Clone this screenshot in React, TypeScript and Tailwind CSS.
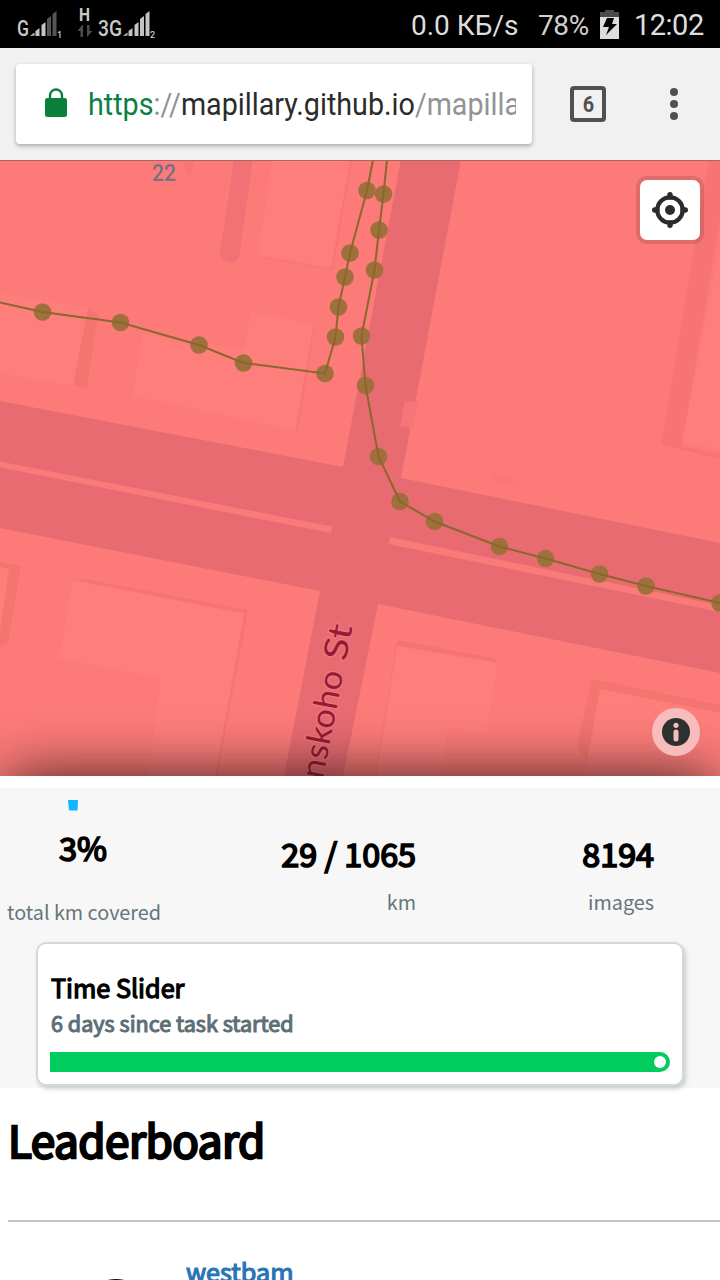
import React from 'react';

const TRACKS = [
  [[-20, 298], [42.5, 312], [120.5, 322.5], [199, 345], [243.5, 363], [325, 373.5], [335.5, 337], [338.5, 307], [345, 277], [350, 253], [367, 190.5], [375, 150]],
  [[388, 150], [383.5, 194], [379, 230], [374.5, 270], [361.5, 336], [365.5, 385.5], [378.5, 456.5], [400, 501.5], [434.5, 521.5], [499.5, 546.5], [545.5, 558.5], [599.5, 574], [646, 586], [720, 603]],
];

const STATS = [
  { value: '29 / 1065', label: 'km', box: 'w-[199px]' },
  { value: '8194', label: 'images', box: 'w-[238px]' },
];

const SIM_BARS = [
  { x: 0, h: 3 }, { x: 5, h: 8 }, { x: 11, h: 14 }, { x: 16.5, h: 20 }, { x: 22, h: 25 },
];

function Signal({ name, sim, lit, className }: { name: string; sim: number; lit: number; className: string }) {
  const textW = name === 'G' ? 12 : 24;
  const x0 = textW + 1.5;
  return (
    <svg className={className} height="30" viewBox={`0 0 ${x0 + 34} 30`} width={x0 + 34}>
      <text x="0" y="25" fontSize="22" fontWeight="500" fill="#c9c9c9" textLength={textW} lengthAdjust="spacingAndGlyphs">{name}</text>
      {SIM_BARS.map((b, i) => (
        <path key={b.x} d={`M${x0 + b.x} 25v-${Math.max(b.h - 3, 0.5)}l4-3v${b.h}z`} fill={i < lit ? '#c4c4c4' : '#555'} />
      ))}
      <text x={x0 + 26.5} y="27" fontSize="9" fontWeight="500" fill="#c9c9c9">{sim}</text>
    </svg>
  );
}

function StatusBar() {
  return (
    <div className="h-12 bg-black flex items-center text-[#dedede] text-[29px]">
      <Signal name="G" sim={1} lit={3} className="ml-[17px] mt-1" />
      <svg className="ml-3 w-4 h-[34px] -mt-1" viewBox="0 0 16 34">
        <text x="2" y="16" fontSize="18" fontWeight="700" fill="#c9c9c9" textLength="11" lengthAdjust="spacingAndGlyphs">H</text>
        <path d="M5 20l-4.500 6H3.500v6H6V20zM10 20h2.500v6h3l-5.500 6z" fill="#4c4c4c" />
      </svg>
      <Signal name="3G" sim={2} lit={5} className="ml-[5px] mt-1" />
      <div className="ml-auto mr-[16px] flex items-center whitespace-nowrap pt-1">
        <span className="w-[107px] text-[28px]">0.0 КБ/s</span>
        <span className="ml-[20px] w-[52px] text-[28px] tracking-[-0.4px] text-[#d0d0d0]">78%</span>
        <svg className="ml-[10px] w-5 h-[30px] -mt-1" viewBox="0 0 20 30">
          <path d="M5 1h9v2h5v5H0V3h5z" fill="#4b4b4b" />
          <path d="M0 8h19v22H0z" fill="#dcdcdc" />
          <path d="M7 9h7l-2 6h5L6 26l3-8H3z" fill="#000" />
        </svg>
        <span className="ml-[14px] w-[70px] tracking-[-0.5px]">12:02</span>
      </div>
    </div>
  );
}

function AddressBar() {
  return (
    <div className="h-28 bg-[#f1f1f1] flex items-center px-4">
      <div className="w-[516px] h-20 rounded-[4px] bg-white shadow-[0_2px_4px_rgba(0,0,0,0.3)] flex items-center pl-[28px] pr-4">
        <svg className="w-6 h-[30px] shrink-0 -mt-1" viewBox="0 0 24 30">
          <path d="M6 12V8.500a6 6 0 0 1 12 0V12" fill="none" stroke="#0a803a" strokeWidth="2.400" />
          <rect x="1" y="11" width="22" height="19" rx="2.500" fill="#0a803a" />
        </svg>
        <div className="ml-5 w-[429px] overflow-hidden whitespace-nowrap">
          <div className="w-max origin-left scale-x-[0.896] text-[32px] leading-10 text-[#2b2b2b]">
            <span className="text-[#0b8043]">https</span>
            <span className="text-[#939393]">://</span>
            mapillary.github.io
            <span className="text-[#939393]">/mapilla</span>
          </div>
        </div>
      </div>
      <div className="ml-[38px] w-9 h-9 rounded-[4px] border-4 border-[#505050] flex items-center justify-center text-[22px] font-bold text-[#505050]">
        <span className="scale-x-90">6</span>
      </div>
      <div className="ml-[64px] flex flex-col gap-1">
        <i className="w-2 h-2 rounded-full bg-[#505050]" />
        <i className="w-2 h-2 rounded-full bg-[#505050]" />
        <i className="w-2 h-2 rounded-full bg-[#505050]" />
      </div>
    </div>
  );
}

function MapView() {
  return (
    <div className="relative h-[616px] overflow-hidden bg-[#fc7b79]">
      <svg className="block w-full h-full" viewBox="0 160 720 616">
        {/* building shadows */}
        <g fill="#f47470">
          <path d="M87 308L98 315 87 388 72 385z" />
          <path d="M0 562l21 4-13 77-8 4z" />
          <path d="M75 580l9-1 164 31-31 166h-2l29-163z" />
          <path d="M396 646l2-6 95 18 6 5-102-17-20 130h-2z" />
          <path d="M592 679l128 26v8l-120-24-13 71-10-13z" />
          <path d="M709 160h11v60l-38 226 38 8v5l-59-14z" opacity=".8" />
          <path d="M260 254l72 13v4l-72-13z" opacity=".4" />
          <path d="M350 160h2l-19 110h-2zM313 323l2 1-17 107-2-1z" opacity=".8" />
        </g>
        {/* buildings */}
        <g fill="#fe7e7c">
          <path d="M0 293l88 15-15 78-73-13z" />
          <path d="M272 160h78l-19 108-73-13z" />
          <path d="M251 312l63 12-20 106-162-34 11-62 102 15z" />
          <path d="M0 567l9 2-9 63z" />
          <path d="M73 581l171 33-29 162h-67l13-98-102-19z" />
          <path d="M397 646l101 17-12 71-38-6-8 48h-64z" />
          <path d="M600 689l120 24v63h-135z" />
          <path d="M720 245v205l-38-8z" />
        </g>
        <path d="M493 474l26 5-2 7-26-4z" fill="#f97977" />
        <path d="M234 160h19l-14 97a10 10 0 0 1-19-4z" fill="#f07275" />
        <path d="M182 160h12l-5 20z" fill="#f67577" />

        {/* roads */}
        <path d="M0 401L343 467 401 160H461L401 478 720 543V673L378 604 343 776H284L320 591 0 528z" fill="#e86b71" />
        <path d="M0 461.500L332 526.500 331 533 0 467.500zM390 537L720 605.500V612L388 544z" fill="#fa7a79" />
        <path d="M405 401l13 1-5 26-13-2z" fill="#f57679" />

        {TRACKS.map((track, i) => (
          <g key={i}>
            <g fill="#a0703c">
              {track.map(([x, y]) => <circle key={`${x}-${y}`} cx={x} cy={y} r="8.800" />)}
            </g>
            <polyline points={track.map((p) => p.join(',')).join(' ')} fill="none" stroke="#8a672d" strokeWidth="2" />
          </g>
        ))}

        <text x="152" y="180.500" className="font-['Roboto']" fontSize="24" fontWeight="500" fill="#7d6f83" textLength="24" lengthAdjust="spacingAndGlyphs">22</text>
        <g
          transform="translate(352.500 626.500) rotate(-79)"
          textAnchor="end"
          className="font-['Lato',sans-serif]"
          fontSize="33"
          fill="#951a33"
          stroke="#ee777e"
          strokeWidth="2.500"
          strokeLinejoin="round"
          paintOrder="stroke"
        >
          <text x="0" y="0" textLength="36" lengthAdjust="spacingAndGlyphs">St</text>
          <text x="-47" y="0" textLength="109" lengthAdjust="spacingAndGlyphs">nskoho</text>
        </g>
      </svg>

      <div className="absolute inset-x-2 -bottom-32 h-32 shadow-[0_0_56px_rgba(30,15,15,0.85)]" />
      <div className="absolute inset-x-0 top-0 h-px bg-[#b4605e]" />

      <button className="absolute top-5 right-5 w-[60px] h-[60px] rounded-[7px] bg-white shadow-[0_0_0_4px_rgba(0,0,0,0.12)] flex items-center justify-center">
        <svg className="w-9 h-9" viewBox="0 0 36 36">
          <circle cx="18" cy="18" r="12.700" fill="none" stroke="#2b2b2b" strokeWidth="4.200" />
          <circle cx="18" cy="18" r="5" fill="#2b2b2b" />
          <path d="M18 2.700V5M18 31v2.300M2.700 18H5M31 18h2.300" stroke="#2b2b2b" strokeWidth="5.400" strokeLinecap="round" />
        </svg>
      </button>

      <div className="absolute right-5 bottom-5 w-12 h-12 rounded-full bg-[#f7bcbb] flex items-center justify-center">
        <svg className="w-7 h-7" viewBox="0 0 28 28">
          <circle cx="14" cy="14" r="14" fill="#2c302f" />
          <circle cx="14" cy="7.300" r="2.600" fill="#f7bcbb" />
          <path d="M14 14v7" stroke="#f7bcbb" strokeWidth="5" strokeLinecap="round" />
        </svg>
      </div>
    </div>
  );
}

function Stats() {
  return (
    <div className="h-[300px] bg-[#f7f7f7] font-['Noto_Sans_CJK_SC',sans-serif]">
      <div className="flex h-[154px]">
        <div className="w-[217px] pt-3">
          <svg className="ml-[67px] block w-3 h-[11px]" viewBox="0 0 12 11">
            <path d="M1 0H11L10.500 10.500H2z" fill="#10b5ff" />
          </svg>
          <div className="ml-[59px] mt-[11px] h-[50px] text-[32.500px] leading-[50px] [-webkit-text-stroke:1.700px]">3%</div>
          <div className="ml-[7px] mt-[25px] text-[19.800px] leading-[30px] text-[#65757b] whitespace-nowrap">total km covered</div>
        </div>
        {STATS.map((s) => (
          <div key={s.label} className={`${s.box} pt-10 text-right whitespace-nowrap`}>
            <div className="h-[50px] text-[32.300px] leading-[50px] [-webkit-text-stroke:1.700px]">{s.value}</div>
            <div className="mt-[9px] text-[19.800px] leading-[30px] text-[#65757b]">{s.label}</div>
          </div>
        ))}
      </div>
      <div className="ml-9 w-[648px] h-[144px] rounded-[10px] border-2 border-[#d3d9d9] bg-white shadow-[2px_3px_4px_rgba(150,165,165,0.5)] pt-[26px] px-3">
        <h2 className="ml-px text-[25.200px] leading-[34px] [-webkit-text-stroke:1.300px]">Time Slider</h2>
        <p className="ml-px mt-[2px] text-[21.600px] leading-[34px] [-webkit-text-stroke:1.100px] text-[#5d6f76]">6 days since task started</p>
        <div className="mt-3 w-[620px] h-5 rounded-r-full bg-[#00cd5e] flex items-center justify-end pr-1">
          <i className="w-3 h-3 rounded-full bg-white" />
        </div>
      </div>
    </div>
  );
}

function Leaderboard() {
  return (
    <div className="pl-2 pt-4 font-['Noto_Sans_CJK_SC',sans-serif]">
      <h1 className="text-[44px] leading-[70px] tracking-[-0.5px] [-webkit-text-stroke:2.400px]">Leaderboard</h1>
      <div className="mt-[46px] border-t-2 border-[#c4c6c6] flex">
        <svg className="ml-[71px] mt-[56px] w-[76px] h-[76px] shrink-0" viewBox="0 0 76 76">
          <circle cx="37" cy="38" r="37" fill="#111" />
        </svg>
        <a className="ml-[31px] mt-[31px] text-[25.200px] leading-9 [-webkit-text-stroke:1.200px] text-[#2775b6]">westbam</a>
      </div>
    </div>
  );
}

export default function App() {
  return (
    <div className="w-[720px] h-[1280px] overflow-hidden bg-white text-black font-['Roboto',sans-serif]">
      <StatusBar />
      <AddressBar />
      <MapView />
      <div className="h-3" />
      <Stats />
      <Leaderboard />
    </div>
  );
}
